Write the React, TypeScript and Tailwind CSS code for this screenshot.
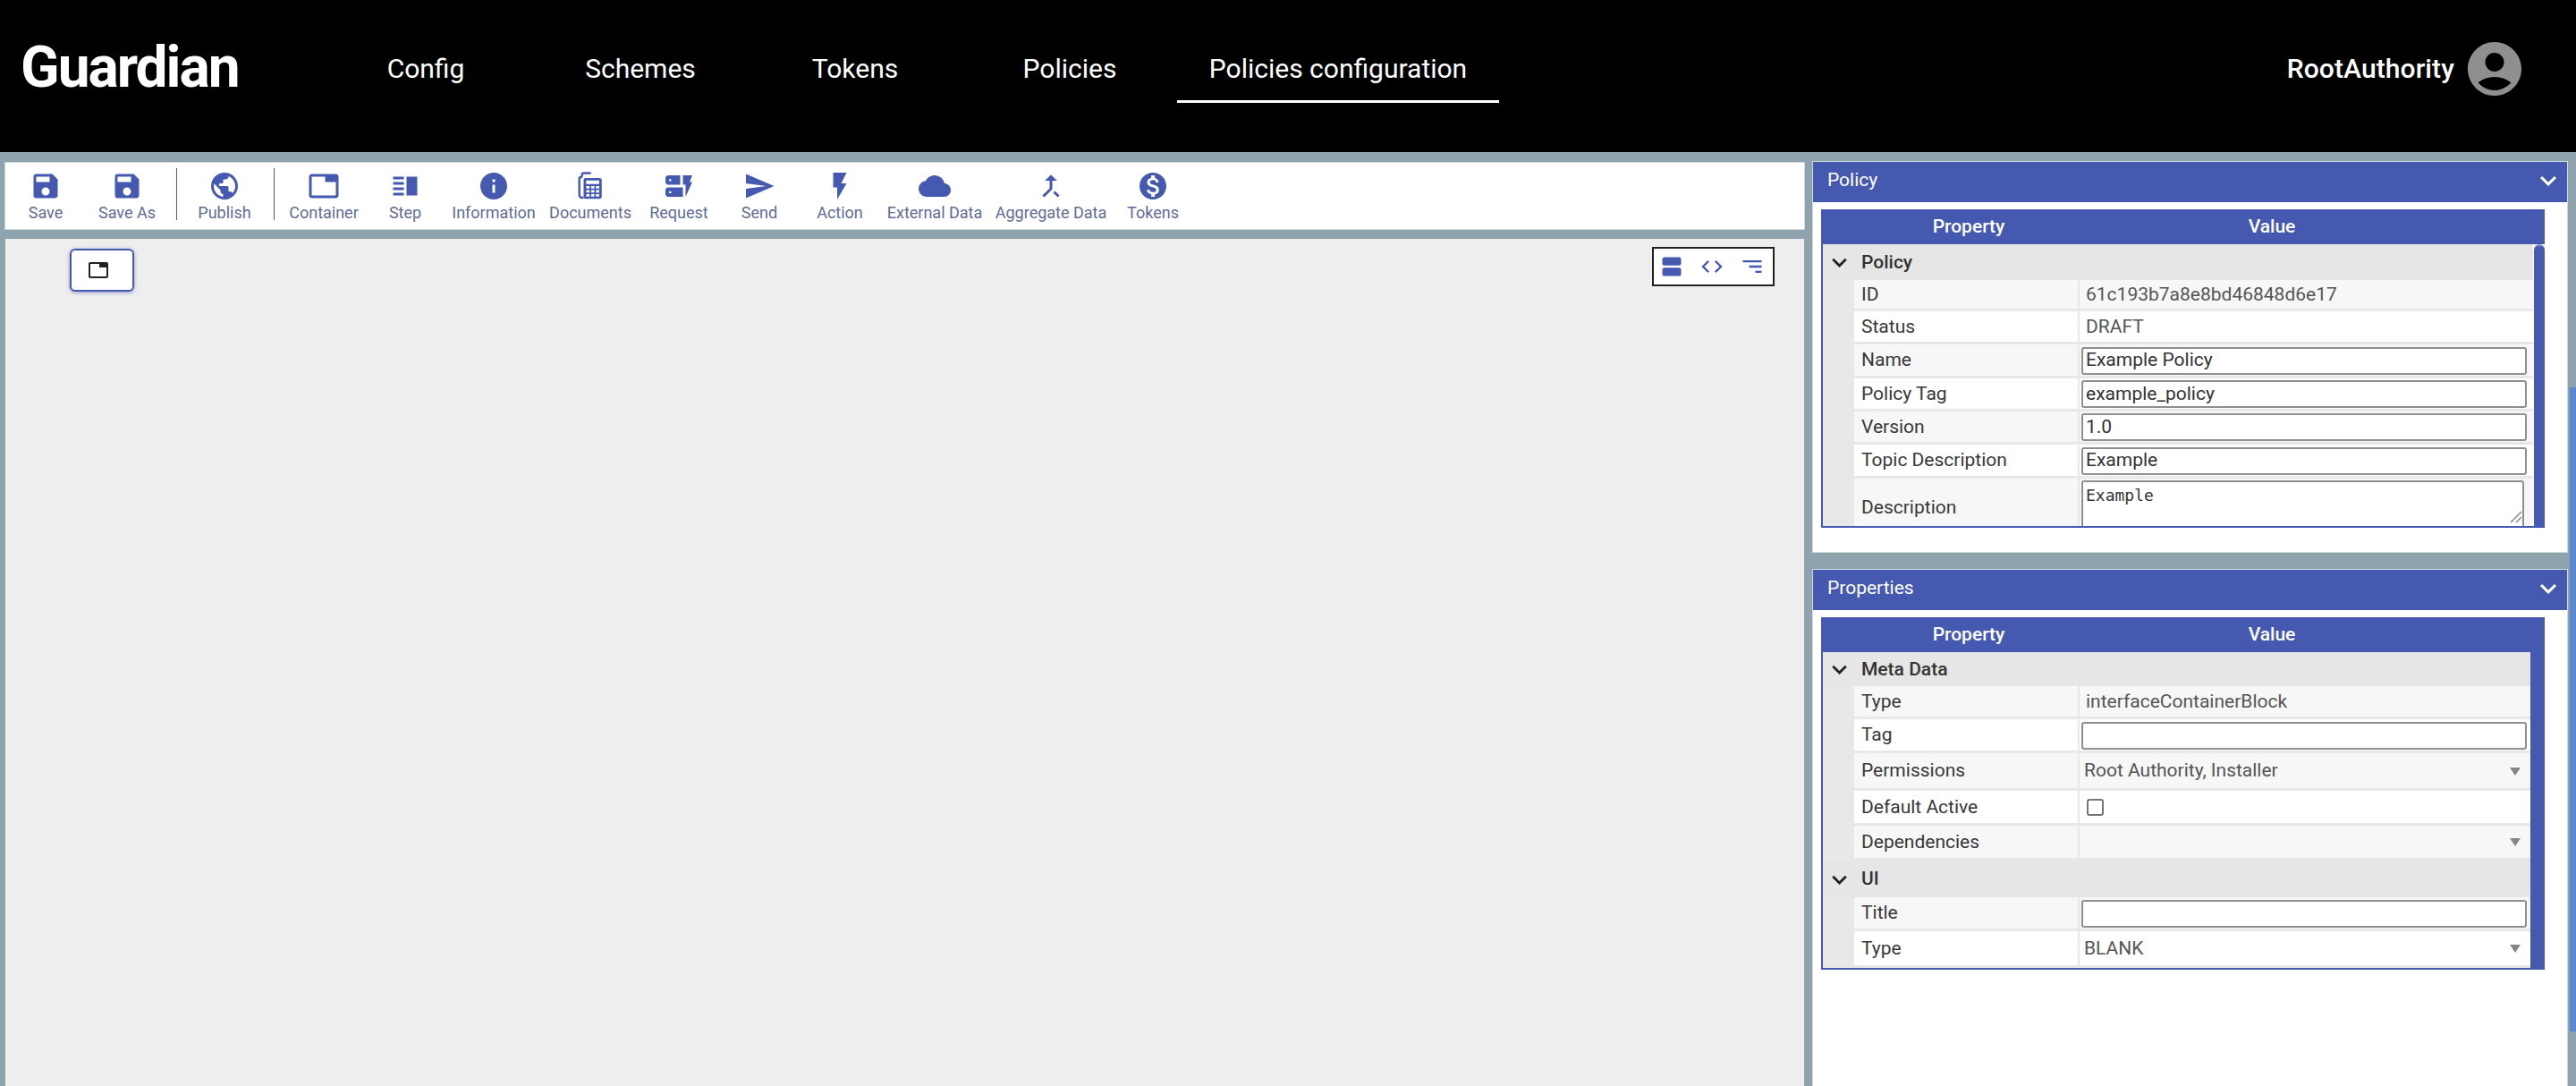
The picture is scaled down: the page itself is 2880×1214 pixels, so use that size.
import React from 'react';
import {
  MdSave, MdPublic, MdTab, MdVerticalSplit, MdInfo, MdDynamicForm, MdSend, MdFlashOn,
  MdCloud, MdCallMerge, MdMonetizationOn, MdViewAgenda, MdCode, MdSort, MdExpandMore, MdAccountCircle,
} from 'react-icons/md';

const DocumentsIcon = ({ className }: { className?: string }) => (
  <svg viewBox="0 0 24 24" className={className} fill="currentColor">
    <path d="M5 3.5a2 2 0 0 1 2-2h5.5v1.6H7a.4.4 0 0 0-.4.4V5H5z" />
    <path d="M3 6.5a2 2 0 0 1 2-2h1v1.6H5a.4.4 0 0 0-.4.4V18a1.9 1.9 0 0 0 1.9 1.9H7v1.6H6A3 3 0 0 1 3 18.500z" />
    <path fillRule="evenodd" d="M8.500 6H19a1.500 1.500 0 0 1 1.500 1.500V20a1.500 1.500 0 0 1-1.500 1.500H8.500A1.500 1.500 0 0 1 7 20V7.500A1.500 1.500 0 0 1 8.500 6zm.4 1.800V10.500h9.700V7.800zM9 12v1.800h2.400V12zm3.600 0v1.800H15V12zm3.600 0v1.800h2.400V12zM9 15v1.800h2.400V15zm3.600 0v1.800H15V15zm3.600 0v1.800h2.400V15zM9 18v1.800h2.400V18zm3.600 0v1.800H15V18zm3.600 0v1.800h2.400V18z" />
  </svg>
);

const tools = [
  { label: 'Save', Icon: MdSave, ml: 'ml-0' },
  { label: 'Save As', Icon: MdSave, ml: 'ml-[1px]' },
  { sep: true, ml: 'ml-[10px]' },
  { label: 'Publish', Icon: MdPublic, ml: 'ml-[8px]' },
  { sep: true, ml: 'ml-[10px]' },
  { label: 'Container', Icon: MdTab, ml: 'ml-[10px]' },
  { label: 'Step', Icon: MdVerticalSplit, ml: 'ml-[1px]' },
  { label: 'Information', Icon: MdInfo, ml: 'ml-[9px]' },
  { label: 'Documents', Icon: DocumentsIcon, ml: 'ml-[18px]' },
  { label: 'Request', Icon: MdDynamicForm, ml: 'ml-[9px]' },
  { label: 'Send', Icon: MdSend, ml: 'ml-0' },
  { label: 'Action', Icon: MdFlashOn, ml: 'ml-0' },
  { label: 'External Data', Icon: MdCloud, ml: 'ml-[16px]' },
  { label: 'Aggregate Data', Icon: MdCallMerge, ml: 'ml-[40px]' },
  { label: 'Tokens', Icon: MdMonetizationOn, ml: 'ml-[24px]' },
];

const navItems = [
  { label: 'Config', w: 'w-[240px]' },
  { label: 'Schemes', w: 'w-[240px]' },
  { label: 'Tokens', w: 'w-[240px]' },
  { label: 'Policies', w: 'w-[240px]' },
  { label: 'Policies configuration', w: 'w-[360px]', active: true },
];

const Input = ({ value = '' }: { value?: string }) => (
  <div className="mx-[2px] flex h-[31px] w-[498px] items-center rounded-[3px] border-2 border-[#8f8f8f] bg-white pl-[3px] text-[21px] text-[#333]">
    {value}
  </div>
);

const Arrow = () => (
  <div className="ml-auto mr-[11px] h-0 w-0 border-x-[6px] border-t-[9px] border-x-transparent border-t-[#858585]" />
);

const Row = ({
  name, h, alt, children,
}: { name: string; h: string; alt?: boolean; children: React.ReactNode }) => (
  <div className={`flex bg-[#e8e8e8] pb-[3px] pl-[35px] ${h}`}>
    <div className={`flex w-[250px] items-center pl-[8px] pt-[1px] text-[21px] text-[#383838] ${alt ? 'bg-[#f7f7f7]' : 'bg-white'}`}>
      {name}
    </div>
    <div className={`ml-[2px] flex flex-1 items-center overflow-hidden pt-[1px] text-[21px] text-[#555] ${alt ? 'bg-[#f7f7f7]' : 'bg-white'}`}>
      {children}
    </div>
  </div>
);

const Group = ({ name, h }: { name: string; h: string }) => (
  <div className={`flex items-center bg-[#e6e6e6] pt-[1px] text-[21px] font-medium text-[#333] ${h}`}>
    <MdExpandMore className="ml-[2px] h-[33px] w-[33px] text-[#222]" />
    <span className="ml-[8px]">{name}</span>
  </div>
);

const PanelHeader = ({ title }: { title: string }) => (
  <div className="flex h-[45px] shrink-0 items-center bg-[#4659b1] pb-[4px] pl-[16px] pr-[3px] text-[21px] text-white">
    {title}
    <MdExpandMore className="ml-auto h-[36px] w-[36px] text-white" />
  </div>
);

const TableHead = () => (
  <div className="flex h-[39px] items-center bg-[#4659b1] pt-[1px] text-[21px] font-medium text-white">
    <div className="w-[326px] text-center">Property</div>
    <div className="w-[352px] text-center">Value</div>
  </div>
);

export default function App() {
  return (
    <div className="relative flex h-screen flex-col overflow-hidden bg-[#8ea3ae] font-['Roboto','Liberation_Sans',sans-serif]">
      {/* Top bar */}
      <header className="flex h-[170px] shrink-0 bg-black text-white">
        <div className="w-[356px] pl-[23px] pt-[40px] text-[64px] font-bold leading-[72px] tracking-[-2px]">Guardian</div>
        <nav className="flex h-[115px] items-end">
          {navItems.map((n) => (
            <div
              key={n.label}
              className={`flex h-[76px] items-start justify-center pt-[20px] text-[30px] leading-[36px] ${n.w} ${n.active ? 'border-b-[3px] border-white' : ''}`}
            >
              {n.label}
            </div>
          ))}
        </nav>
        <div className="ml-auto mr-[55px] mt-[40px] flex h-[74px] items-center">
          <span className="mb-[2px] text-[30px] font-medium tracking-[0.1px]">RootAuthority</span>
          <MdAccountCircle className="ml-[9px] h-[72px] w-[72px] text-[#8f8f8f]" />
        </div>
      </header>

      <main className="flex min-h-0 flex-1">
        {/* Left: toolbar and canvas */}
        <section className="flex w-[2017px] shrink-0 flex-col pl-[6px] pt-[12px]">
          <div className="flex h-[74px] shrink-0 items-start bg-white shadow-[0_0_0_1px_#d0d8dc]">
            {tools.map((t, i) =>
              t.sep ? (
                <div key={i} className={`mt-[6px] h-[58px] w-px bg-[#4659b1] ${t.ml}`} />
              ) : (
                <div key={t.label} className={`flex w-[90px] shrink-0 flex-col items-center pt-[8px] ${t.ml}`}>
                  {t.Icon && <t.Icon className="h-[36px] w-[36px] shrink-0 text-[#4659b1]" />}
                  <span className="mt-[2px] whitespace-nowrap text-[18px] leading-[20px] text-[#5f6c93]">{t.label}</span>
                </div>
              ),
            )}
          </div>
          <div className="relative mt-[11px] flex-1 bg-[#eeeeee] pl-[72px] pt-[11px]">
            <div className="flex h-[48px] w-[72px] items-center justify-center rounded-[6px] border-2 border-[#4659b1] bg-white pr-[9px] shadow-[0_1px_4px_rgba(70,89,177,0.6)]">
              <MdTab className="h-[24px] w-[24px] text-[#222]" />
            </div>
            <div className="absolute right-[33px] top-[9px] flex h-[44px] w-[137px] items-center gap-[17px] border-2 border-[#222] bg-white pl-[6px]">
              <MdViewAgenda className="h-[28px] w-[28px] text-[#4659b1]" />
              <MdCode className="h-[28px] w-[28px] text-[#4659b1]" />
              <MdSort className="h-[28px] w-[28px] -scale-x-100 text-[#4659b1]" />
            </div>
          </div>
        </section>

        {/* Right: property panels */}
        <aside className="ml-[10px] flex w-[843px] shrink-0 flex-col pt-[11px]">
          <div className="h-[436px] shrink-0 bg-white shadow-[0_0_0_1px_#d0d8dc]">
            <PanelHeader title="Policy" />
            <div className="ml-[9px] mt-[8px] h-[356px] w-[809px] overflow-hidden border-b-2 border-l-2 border-[#4659b1]">
              <TableHead />
              <div className="flex">
                <div className="w-[794px]">
                  <Group name="Policy" h="h-[40px]" />
                  <Row name="ID" h="h-[35px]" alt><span className="pl-[7px]">61c193b7a8e8bd46848d6e17</span></Row>
                  <Row name="Status" h="h-[37px]"><span className="pl-[7px]">DRAFT</span></Row>
                  <Row name="Name" h="h-[38px]" alt><Input value="Example Policy" /></Row>
                  <Row name="Policy Tag" h="h-[37px]"><Input value="example_policy" /></Row>
                  <Row name="Version" h="h-[37px]" alt><Input value="1.0" /></Row>
                  <Row name="Topic Description" h="h-[38px]"><Input value="Example" /></Row>
                  <div className="flex h-[60px] bg-[#e8e8e8] pl-[35px]">
                    <div className="flex w-[250px] items-center bg-[#f7f7f7] pl-[8px] pt-[6px] text-[21px] text-[#383838]">Description</div>
                    <div className="ml-[2px] flex-1 bg-[#f7f7f7]">
                      <div className="relative mx-[2px] mt-[2px] h-[60px] w-[495px] rounded-t-[3px] border-2 border-[#8f8f8f] bg-white pl-[3px] pt-[3px] font-['DejaVu_Sans_Mono',monospace] text-[18px] leading-[24px] text-[#333]">
                        Example
                        <svg viewBox="0 0 14 14" className="absolute bottom-[10px] right-0 h-[14px] w-[14px] text-[#888]" fill="none" stroke="currentColor" strokeWidth="1.500">
                          <path d="M1 13 13 1M7 13l6-6" />
                        </svg>
                      </div>
                    </div>
                  </div>
                </div>
                <div className="ml-[1px] mt-0 w-[12px] rounded-t-[6px] border-t-2 border-[#7d8fd0] bg-[#4659b1]" />
              </div>
            </div>
          </div>

          <div className="mt-[20px] flex-1 bg-white shadow-[0_0_0_1px_#d0d8dc]">
            <PanelHeader title="Properties" />
            <div className="ml-[9px] mt-[8px] w-[809px] border-b-2 border-l-2 border-[#4659b1]">
              <TableHead />
              <div className="flex">
                <div className="w-[791px]">
                  <Group name="Meta Data" h="h-[38px]" />
                  <Row name="Type" h="h-[37px]" alt><span className="pl-[7px]">interfaceContainerBlock</span></Row>
                  <Row name="Tag" h="h-[38px]"><Input /></Row>
                  <Row name="Permissions" h="h-[42px]" alt><span className="pl-[5px]">Root Authority, Installer</span><Arrow /></Row>
                  <Row name="Default Active" h="h-[39px]">
                    <div className="ml-[8px] h-[19px] w-[19px] rounded-[3px] border-2 border-[#777] bg-white" />
                  </Row>
                  <Row name="Dependencies" h="h-[39px]" alt><Arrow /></Row>
                  <Group name="UI" h="h-[41px]" />
                  <Row name="Title" h="h-[38px]" alt><Input /></Row>
                  <Row name="Type" h="h-[41px]"><span className="pl-[5px]">BLANK</span><Arrow /></Row>
                </div>
                <div className="w-[16px] bg-[#4659b1]" />
              </div>
            </div>
          </div>
        </aside>
      </main>

      {/* Page scrollbar thumb */}
      <div className="absolute right-0 top-[433px] h-[720px] w-[7px] bg-[#5b87d0]" />
    </div>
  );
}
